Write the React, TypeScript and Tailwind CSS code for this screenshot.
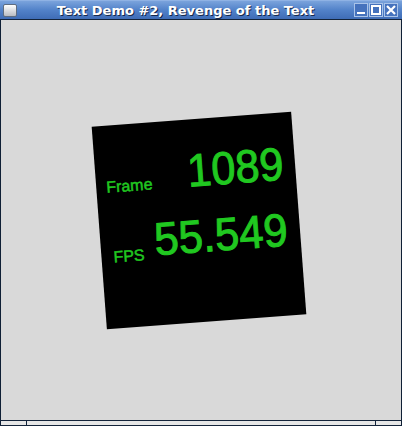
import React from "react";

function MinIcon() {
  return (
    <svg width="14" height="14" viewBox="0 0 14 14">
      <rect x="3" y="9" width="8" height="2" fill="#ffffff" />
    </svg>
  );
}
function MaxIcon() {
  return (
    <svg width="14" height="14" viewBox="0 0 14 14">
      <rect x="3" y="3" width="8" height="8" fill="none" stroke="#ffffff" strokeWidth="2" />
    </svg>
  );
}
function CloseIcon() {
  return (
    <svg width="14" height="14" viewBox="0 0 14 14">
      <path d="M3 3 L11 11 M11 3 L3 11" stroke="#ffffff" strokeWidth="2.2" />
    </svg>
  );
}

function TitleButton({ children }: { children: React.ReactNode }) {
  return (
    <div className="w-[14px] h-[14px] border border-[#a9c3e8] bg-[#4572bd] flex items-center justify-center box-border">
      <div className="-m-[1px]">{children}</div>
    </div>
  );
}

export default function App() {
  return (
    <div className="w-[402px] h-[426px] flex flex-col bg-[#0f1f35] overflow-hidden">
      {/* title bar */}
      <div className="h-[19px] flex items-center pl-[3px] pr-[4px] bg-gradient-to-b from-[#7aa3dc] via-[#5282c9] to-[#3f6cb6] border-t border-[#8fb2e4]">
        <div className="w-[14px] h-[13px] rounded-[2px] border border-[#5f6d80] bg-gradient-to-b from-[#ffffff] to-[#b9bcc2]" />
        <div className="flex-1 text-center font-['DejaVu_Sans',sans-serif] font-bold text-[13px] leading-none text-white [text-shadow:1px_1px_0_#17284a]">
          Text Demo #2, Revenge of the Text
        </div>
        <div className="flex gap-[1px]">
          <TitleButton>
            <MinIcon />
          </TitleButton>
          <TitleButton>
            <MaxIcon />
          </TitleButton>
          <TitleButton>
            <CloseIcon />
          </TitleButton>
        </div>
      </div>
      <div className="h-[1px] bg-[#13233a]" />
      {/* content */}
      <div className="h-[400px] mx-[1px] bg-[#d9d9d9] flex items-center justify-center">
        <div className="mr-[4px] w-[200px] h-[203px] bg-black rotate-[-4.3deg] text-[#20c820] font-['Liberation_Sans',sans-serif] pl-[10px] pr-[12px] pt-[28px] flex flex-col gap-[20px] [-webkit-text-stroke:0.5px_#20c820]">
          <div className="flex items-baseline justify-between">
            <span className="text-[16px] leading-none">Frame</span>
            <span className="inline-block text-[46px] leading-none origin-right scale-x-[0.94] [-webkit-text-stroke:1px_#20c820]">1089</span>
          </div>
          <div className="flex items-baseline justify-between">
            <span className="text-[16px] leading-none ml-[2px] translate-y-[4px]">FPS</span>
            <span className="inline-block text-[46px] leading-none origin-right scale-x-[0.95] [-webkit-text-stroke:1px_#20c820]">55.549</span>
          </div>
        </div>
      </div>
      <div className="h-[1px] bg-[#13233a]" />
      {/* bottom frame */}
      <div className="h-[4px] mx-[1px] flex bg-[#e6e6e6]">
        <div className="w-[25px]" />
        <div className="w-[1px] bg-[#13233a]" />
        <div className="flex-1" />
        <div className="w-[1px] bg-[#13233a]" />
        <div className="w-[25px]" />
      </div>
      <div className="h-[1px] bg-[#13233a]" />
    </div>
  );
}
